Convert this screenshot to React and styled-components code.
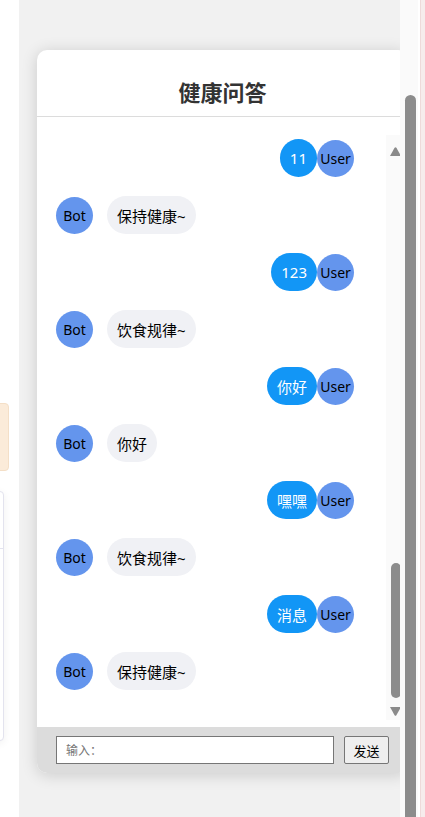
import styled, { createGlobalStyle } from 'styled-components';

const GlobalStyle = createGlobalStyle`
  html, body {
    margin: 0;
    padding: 0;
    background: #fff;
  }
  body {
    font-family: "Noto Sans", "Noto Sans CJK SC", sans-serif;
  }
  * { box-sizing: border-box; }
`;

const Page = styled.div`
  display: flex;
  width: 425px;
  height: 817px;
  overflow: hidden;
`;

const SideRail = styled.div`
  width: 19px;
  flex-shrink: 0;
  background: #fff;
  padding-top: 403px;
  display: flex;
  flex-direction: column;
  gap: 20px;
  overflow: hidden;
`;

const PeekCard = styled.div`
  width: 40px;
  height: ${p => (p.warm ? '68px' : '250px')};
  margin-left: ${p => (p.warm ? '-31px' : '-36px')};
  border-radius: 4px;
  border: 1px solid ${p => (p.warm ? '#f4dfc7' : '#e3e3ee')};
  background: ${p => (p.warm ? '#fbebd9' : '#fff')};
  box-shadow: ${p => (p.warm ? 'none' : '0 2px 8px rgba(0, 0, 0, 0.06)')};
  padding-top: 56px;
`;

const PeekDivider = styled.div`
  border-top: 1px solid #e3e3ee;
`;

const Stage = styled.div`
  width: 381px;
  flex-shrink: 0;
  background: #f1f1f1;
  overflow: hidden;
  padding: 50px 0 0 18px;
`;

const ChatCard = styled.div`
  width: 371px;
  height: 723px;
  background: #fff;
  border-radius: 10px;
  box-shadow: 0 2px 16px rgba(0, 0, 0, 0.16);
  overflow: hidden;
  display: flex;
  flex-direction: column;
`;

const Header = styled.div`
  height: 67px;
  flex-shrink: 0;
  border-bottom: 1px solid #dcdcdc;
  display: flex;
  align-items: flex-end;
  justify-content: center;
  padding-bottom: 7px;
`;

const Title = styled.h2`
  margin: 0;
  font-size: 22px;
  line-height: 33px;
  font-weight: 700;
  color: #333;
`;

const ChatBox = styled.div`
  margin: 18px 7px 7px 7px;
  height: 585px;
  display: flex;
`;

const MessageList = styled.div`
  flex: 1;
  padding: 4px 32px 0 12px;
  display: flex;
  flex-direction: column;
  gap: 19px;
`;

const Row = styled.div`
  display: flex;
  align-items: center;
  justify-content: ${p => (p.mine ? 'flex-end' : 'flex-start')};
  gap: ${p => (p.mine ? '0' : '14px')};
`;

const Avatar = styled.div`
  width: 37px;
  height: 37px;
  border-radius: 50%;
  background: #6495ed;
  color: #000;
  font-size: 14px;
  display: flex;
  align-items: center;
  justify-content: center;
  flex-shrink: 0;
`;

const Bubble = styled.div`
  height: 38px;
  padding: 0 10px;
  border-radius: 19px;
  display: flex;
  align-items: center;
  font-size: 15px;
  background: ${p => (p.mine ? '#1296f6' : '#f0f1f5')};
  color: ${p => (p.mine ? '#fff' : '#000')};
`;

const ScrollTrack = styled.div`
  width: 15px;
  flex-shrink: 0;
  background: #fafafa;
  display: flex;
  flex-direction: column;
  padding-left: 4px;
`;

const Arrow = styled.svg`
  width: 11px;
  height: 9px;
  display: block;
  margin: ${p => (p.down ? '9px 0 4px' : '12px 0 0')};
  fill: #8a8a8a;
`;

const InnerThumb = styled.div`
  margin-top: auto;
  margin-left: 1px;
  width: 10px;
  height: 135px;
  border-radius: 5px;
  background: #8c8c8c;
`;

const InputBar = styled.div`
  height: 46px;
  flex-shrink: 0;
  background: #dcdcdc;
  display: flex;
  align-items: center;
  gap: 10px;
  padding: 0 19px;
`;

const TextInput = styled.input`
  flex: 1;
  height: 28px;
  border: 1px solid #767676;
  border-radius: 0;
  padding: 0 9px;
  font-size: 12px;
  font-family: inherit;
  background: #fff;
  &::placeholder { color: #757575; }
`;

const SendButton = styled.button`
  width: 45px;
  height: 28px;
  border: 1px solid #767676;
  border-radius: 2px;
  background: #efefef;
  font-size: 13px;
  font-family: inherit;
  color: #000;
  padding: 0;
`;

const PageScroll = styled.div`
  width: 18px;
  flex-shrink: 0;
  background: #fafafa;
  padding: 95px 2px 0 5px;
  display: flex;
`;

const PageThumb = styled.div`
  width: 11px;
  border-radius: 6px 6px 0 0;
  background: #8c8c8c;
`;

const EdgeStrip = styled.div`
  flex: 1;
  background: #fbfbfb;
  border-left: 2px solid #fff;
  display: flex;
`;

const EdgeBand = styled.div`
  flex: 1;
  background: #f6ecec;
  border-left: 1px solid #eedada;
`;

const messages = [
  { mine: true, text: '11' },
  { mine: false, text: '保持健康~' },
  { mine: true, text: '123' },
  { mine: false, text: '饮食规律~' },
  { mine: true, text: '你好' },
  { mine: false, text: '你好' },
  { mine: true, text: '嘿嘿' },
  { mine: false, text: '饮食规律~' },
  { mine: true, text: '消息' },
  { mine: false, text: '保持健康~' },
];

export default function App() {
  return (
    <>
      <GlobalStyle />
      <Page>
        <SideRail>
          <PeekCard warm />
          <PeekCard>
            <PeekDivider />
          </PeekCard>
        </SideRail>
        <Stage>
          <ChatCard>
            <Header>
              <Title>健康问答</Title>
            </Header>
            <ChatBox>
              <MessageList>
                {messages.map((m, i) => (
                  <Row key={i} mine={m.mine}>
                    {m.mine ? (
                      <>
                        <Bubble mine>{m.text}</Bubble>
                        <Avatar>User</Avatar>
                      </>
                    ) : (
                      <>
                        <Avatar>Bot</Avatar>
                        <Bubble>{m.text}</Bubble>
                      </>
                    )}
                  </Row>
                ))}
              </MessageList>
              <ScrollTrack>
                <Arrow viewBox="0 0 11 9">
                  <path d="M4.6 0.8 Q5.5 -0.2 6.4 0.8 L11 9 L0 9 Z" />
                </Arrow>
                <InnerThumb />
                <Arrow down viewBox="0 0 11 9">
                  <path d="M0 0 L11 0 L6.4 8.2 Q5.5 9.2 4.6 8.2 Z" />
                </Arrow>
              </ScrollTrack>
            </ChatBox>
            <InputBar>
              <TextInput placeholder="输入：" />
              <SendButton>发送</SendButton>
            </InputBar>
          </ChatCard>
        </Stage>
        <PageScroll>
          <PageThumb />
        </PageScroll>
        <EdgeStrip>
          <EdgeBand />
        </EdgeStrip>
      </Page>
    </>
  );
}
